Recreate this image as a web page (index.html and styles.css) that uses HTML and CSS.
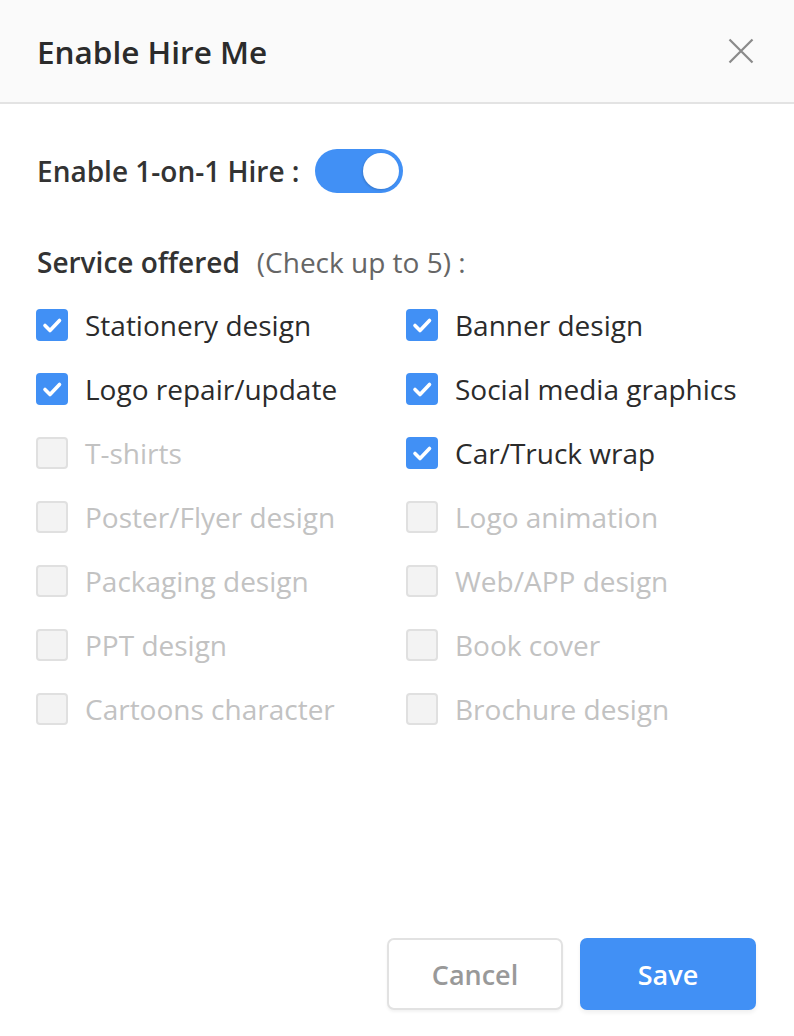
FILE: index.html
```html
<!DOCTYPE html>
<html lang="en">
<head>
<meta charset="utf-8">
<title>Enable Hire Me</title>
<link rel="stylesheet" href="styles.css">
</head>
<body>
<div class="dialog">
  <header class="header">
    <h1 class="title">Enable Hire Me</h1>
    <button class="close" aria-label="Close">
      <svg width="26" height="26" viewBox="0 0 26 26"><path d="M1.5 1.5 L24.5 24.5 M24.5 1.5 L1.5 24.5" stroke="#8a8a8a" stroke-width="2.2" fill="none"/></svg>
    </button>
  </header>
  <main class="content">
    <div class="toggle-row">
      <span class="toggle-label">Enable 1-on-1 Hire :</span>
      <span class="toggle"><span class="knob"></span></span>
    </div>
    <div class="section-title"><span class="strong">Service offered</span><span class="hint">(Check up to 5) :</span></div>
    <div class="grid">
      <div class="item checked"><span class="box"><svg viewBox="0 0 32 32"><path d="M9 16.5 L14 21.5 L23.5 11.5"/></svg></span><span class="label">Stationery design</span></div>
      <div class="item checked"><span class="box"><svg viewBox="0 0 32 32"><path d="M9 16.5 L14 21.5 L23.5 11.5"/></svg></span><span class="label">Banner design</span></div>
      <div class="item checked"><span class="box"><svg viewBox="0 0 32 32"><path d="M9 16.5 L14 21.5 L23.5 11.5"/></svg></span><span class="label">Logo repair/update</span></div>
      <div class="item checked"><span class="box"><svg viewBox="0 0 32 32"><path d="M9 16.5 L14 21.5 L23.5 11.5"/></svg></span><span class="label">Social media graphics</span></div>
      <div class="item disabled"><span class="box"></span><span class="label">T-shirts</span></div>
      <div class="item checked"><span class="box"><svg viewBox="0 0 32 32"><path d="M9 16.5 L14 21.5 L23.5 11.5"/></svg></span><span class="label">Car/Truck wrap</span></div>
      <div class="item disabled"><span class="box"></span><span class="label">Poster/Flyer design</span></div>
      <div class="item disabled"><span class="box"></span><span class="label">Logo animation</span></div>
      <div class="item disabled"><span class="box"></span><span class="label">Packaging design</span></div>
      <div class="item disabled"><span class="box"></span><span class="label">Web/APP design</span></div>
      <div class="item disabled"><span class="box"></span><span class="label">PPT design</span></div>
      <div class="item disabled"><span class="box"></span><span class="label">Book cover</span></div>
      <div class="item disabled"><span class="box"></span><span class="label">Cartoons character</span></div>
      <div class="item disabled"><span class="box"></span><span class="label">Brochure design</span></div>
    </div>
  </main>
  <footer class="footer">
    <button class="btn btn-cancel">Cancel</button>
    <button class="btn btn-save">Save</button>
  </footer>
</div>
</body>
</html>
```
FILE: styles.css
```css
* { box-sizing: border-box; }
html, body { margin: 0; padding: 0; background: #fff; }
body { font-family: "Open Sans", "Noto Sans", sans-serif; color: #333; }
.dialog { width: 794px; height: 1036px; display: flex; flex-direction: column; }
.header {
  height: 104px; background: #fafafa; border-bottom: 2px solid #e3e3e3;
  display: flex; align-items: center; justify-content: space-between;
  padding: 0 40px 0 37px;
}
.title { margin: 0; font-size: 31.5px; font-weight: 600; color: #2b2b2b; letter-spacing: 0; }
.close { border: 0; background: none; padding: 0; width: 26px; height: 26px; display: flex; }
.content { flex: 1; padding: 44px 0 0 36px; }
.toggle-row { display: flex; align-items: center; height: 46px; }
.toggle-label { font-size: 28px; font-weight: 600; color: #333; margin-left: 1px; }
.toggle {
  margin-left: 15px; width: 88px; height: 44px; border-radius: 22px; background: #4190f5;
  display: flex; align-items: center; justify-content: flex-end; padding-right: 4px;
}
.knob { width: 36px; height: 36px; border-radius: 50%; background: #fff; box-shadow: -1px 1px 2px rgba(0,0,0,0.15); }
.section-title { margin-top: 48px; height: 40px; display: flex; align-items: center; margin-left: 1px; }
.strong { font-size: 28px; font-weight: 600; color: #333; }
.hint { font-size: 28px; color: #666; margin-left: 17px; }
.grid { margin-top: 27px; display: grid; grid-template-columns: 370px 370px; row-gap: 32px; }
.item { display: flex; align-items: center; height: 32px; }
.box { width: 32px; height: 32px; border-radius: 4px; flex: none; display: flex; }
.box svg { width: 32px; height: 32px; }
.box path { fill: none; stroke: #fff; stroke-width: 3.6; stroke-linecap: round; stroke-linejoin: round; }
.checked .box { background: #4190f5; }
.disabled .box { background: #f3f3f3; border: 2px solid #e0e0e0; }
.label { margin-left: 17px; font-size: 28px; white-space: nowrap; }
.checked .label { color: #2b2b2b; }
.disabled .label { color: #c2c2c2; }
.footer { display: flex; justify-content: flex-end; gap: 17px; padding: 0 38px 26px 0; }
.btn {
  width: 176px; height: 72px; border-radius: 7px; font-family: "Open Sans", sans-serif;
  font-size: 27px; font-weight: 600; cursor: pointer;
}
.btn-cancel { background: #fff; border: 2px solid #e2e2e2; color: #999; box-shadow: 0 2px 3px rgba(0,0,0,0.05); }
.btn-save { background: #4190f5; border: 0; color: #fff; box-shadow: 0 3px 4px rgba(0,0,0,0.06); }
```
